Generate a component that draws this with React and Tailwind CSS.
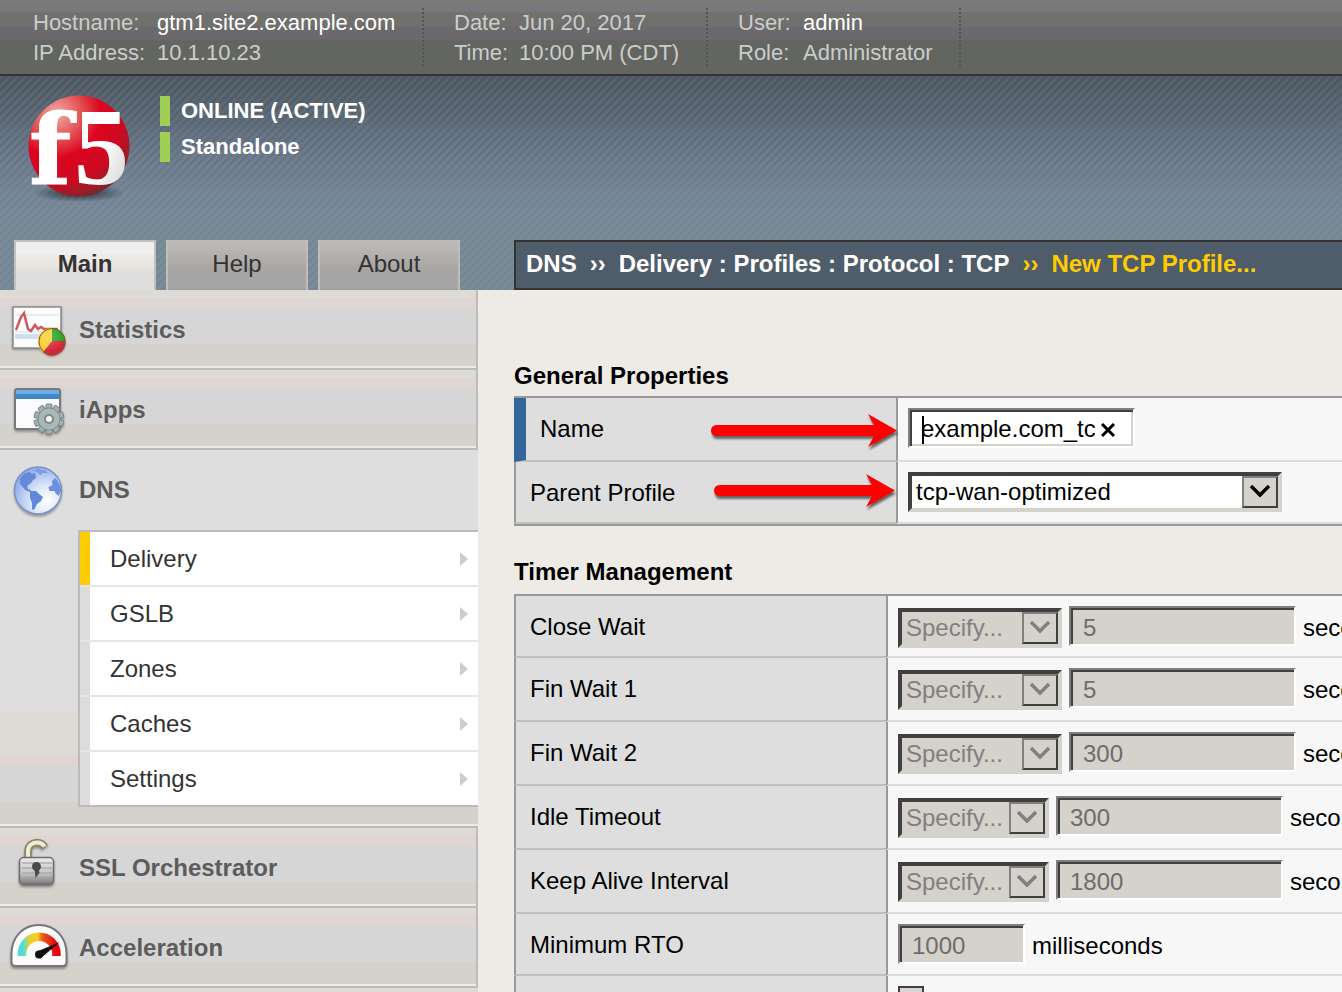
import React from "react";

const STRIPES =
  "bg-[linear-gradient(135deg,rgba(255,255,255,0.05)_25%,transparent_25%_50%,rgba(255,255,255,0.05)_50%_75%,transparent_75%)] bg-[length:8px_8px]";

const BAND =
  "bg-[linear-gradient(to_bottom,#dedad5_0_8px,#dfd5d3_8px_18px,#d6d6d6_18px_54px,#d5d1cb_54px)]";

function StatisticsIcon() {
  return (
    <svg width="60" height="56" viewBox="0 0 60 56" className="drop-shadow-[0_1px_1px_rgba(0,0,0,0.35)]" aria-hidden="true">
      <defs>
        <radialGradient id="pieShine" cx="0.4" cy="0.3" r="0.8">
          <stop offset="0" stopColor="#fff" stopOpacity="0.3" />
          <stop offset="1" stopColor="#fff" stopOpacity="0" />
        </radialGradient>
      </defs>
      <rect x="3" y="5" width="48" height="41" fill="#fdfdfd" stroke="#8a8a8a" strokeWidth="1.5" />
      <path d="M5 13h44M5 30h44" stroke="#e9edf3" strokeWidth="2" />
      <rect x="5" y="32" width="44" height="5" fill="#cfdff0" />
      <path d="M6 28l5-13 3-4 4 16 3 2 4-6 3 4 3-2 3 2h14" fill="none" stroke="#d0575c" strokeWidth="2.500" />
      <path d="M42 39V26a13.500 13.500 0 0 1 13.500 13z" fill="#159a0c" />
      <path d="M42 39h13.500a13.500 13.500 0 0 1-22.500 11z" fill="#d3142a" />
      <path d="M42 39L33 50a13.500 13.500 0 0 1 9-24z" fill="#f8cb1c" />
      <circle cx="42" cy="39.500" r="13" fill="url(#pieShine)" stroke="#8a5a28" strokeWidth="1" />
    </svg>
  );
}

function IAppsIcon() {
  const teeth = [0, 36, 72, 108, 144, 180, 216, 252, 288, 324];
  return (
    <svg width="60" height="56" viewBox="0 0 60 56" className="drop-shadow-[0_2px_1px_rgba(0,0,0,0.3)]" aria-hidden="true">
      <rect x="5" y="7" width="45" height="40" rx="2" fill="#fbfafc" stroke="#77797c" strokeWidth="2" />
      <rect x="6" y="8" width="43" height="9" fill="#3f87c9" />
      <rect x="6" y="8" width="43" height="4" fill="#6fb0e4" />
      <g fill="#a3b0b2" stroke="#78868a" strokeWidth="1">
        {teeth.map((a) => (
          <rect key={a} x="36" y="22" width="6" height="8" rx="1" transform={`rotate(${a} 39 37)`} />
        ))}
        <circle cx="39" cy="37" r="11" />
      </g>
      <circle cx="39" cy="37" r="10.500" fill="#aab6b8" />
      <circle cx="39" cy="37" r="5" fill="#7d888b" />
      <circle cx="39" cy="37" r="3" fill="#f4f4f4" />
    </svg>
  );
}

function DnsIcon() {
  return (
    <svg width="60" height="56" viewBox="0 0 60 56" className="drop-shadow-[0_2px_1px_rgba(0,0,0,0.3)]" aria-hidden="true">
      <defs>
        <radialGradient id="globeFill" cx="0.68" cy="0.72" r="0.75">
          <stop offset="0" stopColor="#ffffff" />
          <stop offset="0.45" stopColor="#dbe5fb" />
          <stop offset="1" stopColor="#8eadeb" />
        </radialGradient>
      </defs>
      <circle cx="28" cy="28.500" r="23.500" fill="url(#globeFill)" stroke="#7c93c4" strokeWidth="1.5" />
      <path d="M10 16l5-5 5-1 2 2 3-1 1 5-3 2-2 3-4 3 1 3 3 1-1 2-5-2-3-4-2-2z" fill="#6489d8" />
      <path d="M24 9l4-3 3 2 4 0 3 3-5 0-3 2-3-3z" fill="#7d9de2" />
      <path d="M20 29l6 0 3 3 4 3-2 4-4 3-3 6-2-1 0-6-2-5z" fill="#6088da" />
      <path d="M42 19l3-3c3 3 6 8 6.500 13l-3 5-3-3-1-2-5 0-1-4 4-2z" fill="#6a8fdc" />
    </svg>
  );
}

function SslIcon() {
  return (
    <svg width="60" height="56" viewBox="0 0 60 56" className="overflow-visible drop-shadow-[0_2px_1px_rgba(0,0,0,0.35)]" aria-hidden="true">
      <defs>
        <linearGradient id="lockBody" x1="0" y1="0" x2="0" y2="1">
          <stop offset="0" stopColor="#ececec" />
          <stop offset="0.6" stopColor="#c4c4c4" />
          <stop offset="1" stopColor="#767676" />
        </linearGradient>
      </defs>
      <path d="M18 20V11c0-6 5-8.500 9-8.500s6 1.500 8 4.500" fill="none" stroke="#8a8862" strokeWidth="7.500" />
      <path d="M18 20V11c0-6 5-8.500 9-8.500s6 1.500 7.500 4" fill="none" stroke="#eeecd2" strokeWidth="4" />
      <rect x="9.500" y="17.500" width="34" height="27" rx="4" fill="url(#lockBody)" stroke="#6c6c6c" strokeWidth="1.5" />
      <path d="M12 23h30M12 28h30M12 33h30M12 38h30" stroke="#9a9a9a" strokeWidth="1" />
      <circle cx="26.500" cy="26.500" r="4.500" fill="#4a4a4a" />
      <path d="M24.500 28h4l1 5-4 5z" fill="#4a4a4a" />
    </svg>
  );
}

function AccelerationIcon() {
  return (
    <svg width="60" height="56" viewBox="0 0 60 56" className="drop-shadow-[0_2px_1px_rgba(0,0,0,0.35)]" aria-hidden="true">
      <defs>
        <linearGradient id="gauge" x1="0" y1="0" x2="1" y2="0">
          <stop offset="0" stopColor="#4fdcd6" />
          <stop offset="0.08" stopColor="#6fdcc0" />
          <stop offset="0.2" stopColor="#e5cf2c" />
          <stop offset="0.45" stopColor="#f4d020" />
          <stop offset="0.6" stopColor="#ea5a1c" />
          <stop offset="1" stopColor="#e8000f" />
        </linearGradient>
      </defs>
      <path d="M1.500 34C1.500 17 13 5 29 5s27.500 12 27.500 29v8q0 4-4 4h-47q-4 0-4-4z" fill="#fbfbf9" stroke="#77767a" strokeWidth="2" />
      <path d="M12 36v-2a17.200 17.200 0 0 1 34.400 0v2" fill="none" stroke="url(#gauge)" strokeWidth="8.500" />
      <path d="M50 22L31 38a4 4 0 0 1-4-6.500z" fill="#111" />
      <circle cx="29" cy="34.500" r="4" fill="#111" />
    </svg>
  );
}

function Logo() {
  return (
    <svg width="110" height="112" viewBox="0 0 110 112" className="overflow-visible" role="img" aria-label="f5">
      <defs>
        <radialGradient id="ball" cx="0.28" cy="0.18" r="0.9">
          <stop offset="0" stopColor="#f2aca4" />
          <stop offset="0.3" stopColor="#e2484c" />
          <stop offset="0.48" stopColor="#dc0520" />
          <stop offset="0.75" stopColor="#cc0a22" />
          <stop offset="0.9" stopColor="#9c1c28" />
          <stop offset="1" stopColor="#6b2a2c" />
        </radialGradient>
        <radialGradient id="ballShadow">
          <stop offset="0" stopColor="#1c242c" stopOpacity="0.9" />
          <stop offset="1" stopColor="#1c242c" stopOpacity="0" />
        </radialGradient>
        <linearGradient id="five" x1="0" y1="0" x2="1" y2="1">
          <stop offset="0.5" stopColor="#ffffff" />
          <stop offset="1" stopColor="#c9c9c9" />
        </linearGradient>
      </defs>
      <ellipse cx="51" cy="97" rx="46" ry="9" fill="url(#ballShadow)" />
      <circle cx="51" cy="50" r="50.500" fill="url(#ball)" />
      <text x="1" y="88" fontSize="98" fontWeight="bold" fill="#fff" stroke="#fff" strokeWidth="1" className="font-['DejaVu_Serif',serif]">f</text>
      <text x="46" y="88" fontSize="110" fontWeight="bold" fill="url(#five)" className="font-['Liberation_Serif',serif]">5</text>
    </svg>
  );
}

function InfoGroup({ rows, className, labelClass }) {
  return (
    <>
      <dl className={`shrink-0 ${className}`}>
        {rows.map(([label, value, strong]) => (
          <div key={label} className="flex">
            <dt className={`shrink-0 ${labelClass}`}>{label}</dt>
            <dd className={strong ? "text-white" : ""}>{value}</dd>
          </div>
        ))}
      </dl>
      <div className="h-[58px] w-[2px] shrink-0 bg-[repeating-linear-gradient(to_bottom,#555654_0_2px,transparent_2px_4px)]" />
    </>
  );
}

function Tab({ children, active }) {
  return (
    <button
      type="button"
      className={`h-[50px] w-[142px] shrink-0 border-2 border-b-0 pb-1 text-[#333] ${
        active
          ? "border-[#c0c0c0] bg-[linear-gradient(to_bottom,#efeff0_0_12px,#eeeae4_14px,#e6e2df_26px,#dedede_30px)] font-bold"
          : "border-[#bdbcba] bg-[linear-gradient(to_bottom,#bfbab6,#b2b0af_14px,#aaa6a1_26px,#a6a6a6_30px_46px,#999_48px)]"
      }`}
    >
      {children}
    </button>
  );
}

function NavItem({ icon, label }) {
  return (
    <a href="#" className={`flex h-20 items-start border-b-2 border-[#bbb] pl-[10px] shadow-[inset_0_-2px_#eeebe6] ${BAND}`}>
      <span className="mt-3 w-[69px] shrink-0">{icon}</span>
      <span className="mt-[26px] font-bold text-[#5c5c5a]">{label}</span>
    </a>
  );
}

function SubItem({ label, active }) {
  return (
    <li className="border-b-2 border-[#e5e5e5] last:border-b-0">
      <a
        href="#"
        className={`flex h-[53px] items-center justify-between border-l-[10px] bg-white pr-[10px] pl-5 text-[#333] ${
          active ? "border-[#fc0]" : "border-[#dcdcdc]"
        }`}
      >
        {label}
        <svg width="8" height="14" viewBox="0 0 8 14" aria-hidden="true">
          <path d="M0 0L8 7L0 14z" fill="#ccc" />
        </svg>
      </a>
    </li>
  );
}

function SelectBox({ id, label, value, className, disabled }) {
  return (
    <span className={`relative shrink-0 ${className}`}>
      <select
        id={id}
        aria-label={label}
        disabled={disabled}
        className={`block h-10 w-full appearance-none border-4 border-t-[#404040] border-r-[#d5d1cb] border-b-[#d5d1cb] border-l-[#404040] pl-1 leading-7 opacity-100 outline-none ${
          disabled ? "bg-[#d5d1cb] text-[#808080]" : "bg-white text-black"
        }`}
      >
        <option>{value}</option>
      </select>
      <span
        className={`pointer-events-none absolute top-1 right-1 bottom-1 flex w-9 items-center justify-center border-2 border-t-[#808080] border-r-[#404040] border-b-[#404040] border-l-[#808080] bg-[#d5d1cb] ${
          disabled ? "text-[#808080]" : "text-black"
        }`}
      >
        <svg width="20" height="14" viewBox="0 0 20 14" aria-hidden="true">
          <path d="M1 1L10 10L19 1" fill="none" stroke="currentColor" strokeWidth="3.500" />
        </svg>
      </span>
    </span>
  );
}

const FIELD =
  "h-10 shrink-0 border-2 border-t-[#808080] border-l-[#808080] border-r-white border-b-white shadow-[inset_2px_2px_#404040,inset_-2px_-2px_#d5d1cb] outline-none";

function Arrow({ width, className }) {
  return (
    <svg
      width={width}
      height="38"
      viewBox={`0 0 ${width} 38`}
      className={`pointer-events-none absolute z-10 drop-shadow-[1px_3px_1px_rgba(0,0,0,0.55)] ${className}`}
      aria-hidden="true"
    >
      <path
        d={`M5.500 12H${width - 23}L${width - 29} 1L${width} 17.500L${width - 29} 34L${width - 23} 23H5.500A5.500 5.500 0 0 1 5.500 12z`}
        fill="#f00"
      />
    </svg>
  );
}

function Row({ label, htmlFor, required, labelClass, height = "h-16", arrow, children }) {
  return (
    <div className={`relative flex ${height}`}>
      <div
        className={`shrink-0 border-b-2 border-b-[#c4bfb9] bg-[#dedede] pt-[17px] pl-[14px] ${labelClass} ${
          required ? "border-l-[12px] border-l-[#369]" : "border-l-2 border-l-[#999]"
        }`}
      >
        <label htmlFor={htmlFor}>{label}</label>
      </div>
      <div className="flex min-w-0 flex-1 items-start gap-[7px] border-b-2 border-l-2 border-b-[#dcdcdc] border-l-[#999] bg-[#f7f7f7] pl-[10px]">
        {children}
      </div>
      {arrow}
    </div>
  );
}

const TIMERS = [
  { id: "close-wait", label: "Close Wait", value: "5", select: "w-[164px]", height: "h-[62px]" },
  { id: "fin-wait-1", label: "Fin Wait 1", value: "5", select: "w-[164px]" },
  { id: "fin-wait-2", label: "Fin Wait 2", value: "300", select: "w-[164px]" },
  { id: "idle-timeout", label: "Idle Timeout", value: "300", select: "w-[151px]" },
  { id: "keep-alive", label: "Keep Alive Interval", value: "1800", select: "w-[151px]" },
];

export default function App() {
  return (
    <div className="flex h-screen flex-col overflow-hidden bg-[#eeebe6] font-['Liberation_Sans',Arial,sans-serif] text-[24px] leading-7 text-black">
      <header className="shrink-0">
        <div className="flex h-[76px] items-start overflow-hidden border-b-2 border-[#333] bg-[linear-gradient(to_bottom,#787d78_0_2px,#7b787b_3px_11px,#6f716c_13px_18px,#706f6e_26px,#6b696b_28px_39px,#636561_41px)] pt-2 text-[22px] leading-[30px] text-[#ccc]">
          <InfoGroup
            className="w-[422px] pl-[33px]"
            labelClass="w-[124px]"
            rows={[
              ["Hostname:", "gtm1.site2.example.com", true],
              ["IP Address:", "10.1.10.23"],
            ]}
          />
          <InfoGroup
            className="w-[282px] pl-[30px]"
            labelClass="w-[65px]"
            rows={[
              ["Date:", "Jun 20, 2017"],
              ["Time:", "10:00 PM (CDT)"],
            ]}
          />
          <InfoGroup
            className="w-[251px] pl-[30px]"
            labelClass="w-[65px]"
            rows={[
              ["User:", "admin", true],
              ["Role:", "Administrator"],
            ]}
          />
        </div>

        <div className="bg-[linear-gradient(to_bottom,#4c5660,#54616d_30px,#5f6e7e_60px,#6a798a_90px,#728394_120px,#738692_150px)]">
          <div className={STRIPES}>
            <div className="flex h-[164px] items-start gap-[22px] pt-5 pl-7 text-[22px] leading-[30px] font-bold text-white">
              <Logo />
              <div className="flex flex-col gap-[6px]">
                <div className="border-l-[10px] border-[#9fd055] pl-[11px]">ONLINE (ACTIVE)</div>
                <div className="border-l-[10px] border-[#9fd055] pl-[11px]">Standalone</div>
              </div>
            </div>
            <div className="flex pl-[14px]">
              <div className="flex w-[500px] shrink-0 gap-[10px]">
                <Tab active>Main</Tab>
                <Tab>Help</Tab>
                <Tab>About</Tab>
              </div>
              <nav
                aria-label="Breadcrumb"
                className="flex h-[50px] min-w-0 flex-1 items-center overflow-hidden border-2 border-r-0 border-[#333] bg-[#4f5c69] pb-[2px] pl-[10px] font-bold whitespace-nowrap text-white"
              >
                <a href="#">DNS</a>
                <span className="mx-[13px]">››</span>
                <a href="#">Delivery : Profiles : Protocol : TCP</a>
                <span className="mx-[13px] text-[#fc0]">››</span>
                <span className="text-[#fc0]">New TCP Profile...</span>
              </nav>
            </div>
          </div>
        </div>
      </header>

      <div className="flex min-h-0 flex-1">
        <nav aria-label="Main" className="w-[478px] shrink-0 bg-[#dedad5]">
          <div className="border-r-2 border-[#bdbdbd]">
            <NavItem icon={<StatisticsIcon />} label="Statistics" />
            <NavItem icon={<IAppsIcon />} label="iApps" />
          </div>
          <div className="border-b-2 border-[#bbb] bg-[linear-gradient(to_bottom,#dedede_0_262px,#dedad5_262px_306px,#dfd5d3_306px_316px,#d6d6d6_316px_352px,#d5d1cb_352px)] pb-[19px] shadow-[inset_0_-2px_#eeebe6]">
            <a href="#" className="flex h-20 items-start pl-[10px]">
              <span className="mt-3 w-[69px] shrink-0">
                <DnsIcon />
              </span>
              <span className="mt-[26px] font-bold text-[#5c5c5a]">DNS</span>
            </a>
            <ul className="ml-[78px] border-2 border-r-0 border-[#bbb]">
              <SubItem label="Delivery" active />
              <SubItem label="GSLB" />
              <SubItem label="Zones" />
              <SubItem label="Caches" />
              <SubItem label="Settings" />
            </ul>
          </div>
          <div className="border-r-2 border-[#bdbdbd]">
            <NavItem icon={<SslIcon />} label="SSL Orchestrator" />
            <NavItem icon={<AccelerationIcon />} label="Acceleration" />
          </div>
        </nav>

        <main className="min-w-0 flex-1 overflow-hidden pt-[72px] pl-9">
          <h2 className="font-bold">General Properties</h2>
          <section className="mt-[6px] border-y-2 border-[#999]">
            <Row
              label="Name"
              htmlFor="name"
              required
              labelClass="w-[382px]"
              arrow={<Arrow width={186} className="top-[15px] left-[197px]" />}
            >
              <span className="relative mt-[10px]">
                <input
                  id="name"
                  type="text"
                  defaultValue="example.com_tcp"
                  className={`${FIELD} block w-[227px] bg-white pt-[2px] pr-[38px] pl-[11px]`}
                />
                <span className="absolute top-2 left-[14px] h-7 w-[2px] bg-black" />
                <button type="button" aria-label="Clear" className="absolute top-[15px] right-5">
                  <svg width="14" height="14" viewBox="0 0 14 14" className="block" aria-hidden="true">
                    <path d="M1 1L13 13M13 1L1 13" stroke="#000" strokeWidth="3" />
                  </svg>
                </button>
              </span>
            </Row>
            <Row
              label="Parent Profile"
              htmlFor="parent"
              height="h-[62px]"
              labelClass="w-[382px]"
              arrow={<Arrow width={181} className="top-[11px] left-[200px]" />}
            >
              <SelectBox id="parent" value="tcp-wan-optimized" className="mt-[10px] w-[374px]" />
            </Row>
          </section>

          <h2 className="mt-8 font-bold">Timer Management</h2>
          <section className="mt-2 border-t-2 border-[#999]">
            {TIMERS.map((t) => (
              <Row key={t.id} label={t.label} htmlFor={t.id} height={t.height} labelClass="w-[372px]">
                <SelectBox label={`${t.label} mode`} value="Specify..." disabled className={`mt-3 ${t.select}`} />
                <input
                  id={t.id}
                  type="text"
                  disabled
                  defaultValue={t.value}
                  className={`${FIELD} mt-[10px] w-[227px] bg-[#d5d1cb] pt-1 pl-3 text-[#6d6d6a]`}
                />
                <span className="mt-[18px]">seconds</span>
              </Row>
            ))}
            <Row label="Minimum RTO" htmlFor="min-rto" height="h-[62px]" labelClass="w-[372px]">
              <input
                id="min-rto"
                type="text"
                disabled
                defaultValue="1000"
                className={`${FIELD} mt-[10px] w-[127px] bg-[#d5d1cb] pt-1 pl-3 text-[#6d6d6a]`}
              />
              <span className="mt-[18px]">milliseconds</span>
            </Row>
            <Row label="Reset On Timeout" htmlFor="reset" labelClass="w-[372px]">
              <input
                id="reset"
                type="checkbox"
                disabled
                className="mt-[10px] size-[26px] appearance-none border-2 border-[#404040] bg-[#dcd4d1]"
              />
            </Row>
          </section>
        </main>
      </div>
    </div>
  );
}
